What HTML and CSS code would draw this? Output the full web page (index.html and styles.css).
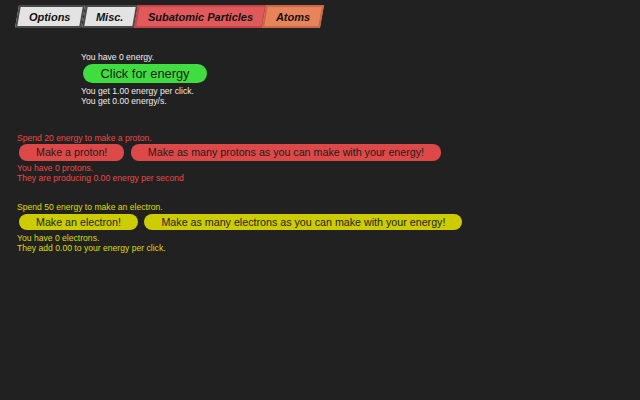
FILE: index.html
```html
<!DOCTYPE html>
<html lang="en">
<head>
    <meta charset="utf-8">
    <title>Particle Clicker</title>
    <link rel="stylesheet" href="styles.css">
</head>
<body>
    <div class="tabs">
        <button class="tab tab-grey"><span>Options</span></button>
        <button class="tab tab-grey"><span>Misc.</span></button>
        <button class="tab tab-red"><span>Subatomic Particles</span></button>
        <button class="tab tab-orange"><span>Atoms</span></button>
    </div>

    <div class="energy">
        <p>You have 0 energy.</p>
        <button class="energy-button">Click for energy</button>
        <p>You get 1.00 energy per click.</p>
        <p>You get 0.00 energy/s.</p>
    </div>

    <div class="particle proton">
        <p>Spend 20 energy to make a proton.</p>
        <div class="buttons">
            <button class="make">Make a proton!</button>
            <button class="make">Make as many protons as you can make with your energy!</button>
        </div>
        <p>You have 0 protons.</p>
        <p>They are producing 0.00 energy per second</p>
    </div>

    <div class="particle electron">
        <p>Spend 50 energy to make an electron.</p>
        <div class="buttons">
            <button class="make">Make an electron!</button>
            <button class="make">Make as many electrons as you can make with your energy!</button>
        </div>
        <p>You have 0 electrons.</p>
        <p>They add 0.00 to your energy per click.</p>
    </div>
</body>
</html>
```

FILE: styles.css
```css
body {
    font-family: 'Liberation Sans', Arial, sans-serif;
    font-size: 8.6px;
    background-color: #212121;
    color: #eeeeee;
    margin: 0;
    padding: 5px 0 0 0;
}

p {
    margin: 0;
    line-height: 10px;
}

button {
    font-family: 'Liberation Sans', Arial, sans-serif;
    cursor: pointer;
}

/* top navigation, slanted tabs */
.tabs {
    display: flex;
    height: 23px;
    margin-left: 17px;
}

.tab {
    height: 23px;
    padding: 0 10px;
    margin-right: 1px;
    border: 2px solid #4a4a4a;
    transform: skewX(-10deg);
    font-size: 11px;
    font-weight: bold;
    color: #111;
}

.tab span {
    display: inline-block;
    font-style: italic;
    transform: skewX(10deg);
}

.tab-grey {
    background-color: #e3e3e3;
}

.tab-red {
    background-color: #e05a5c;
    border-color: #c44448;
}

.tab-orange {
    background-color: #e8845c;
    border-color: #c86a48;
    margin-left: -2px;
}

/* energy */
.energy {
    margin: 24px 0 0 81px;
}

.energy-button {
    display: block;
    margin: 1.5px 0 3px 2px;
    width: 124px;
    height: 19px;
    padding: 0;
    border: none;
    border-radius: 10px;
    background-color: #40dd40;
    color: #1a1a1a;
    font-size: 12.8px;
}

/* particle sections */
.particle {
    margin-left: 17px;
}

.proton {
    margin-top: 27px;
    color: #ee4646;
}

.electron {
    margin-top: 18.5px;
    color: #dddd00;
}

.buttons {
    display: flex;
    gap: 6.5px;
    margin: 1.8px 0 2.6px 2px;
}

.make {
    height: 16.4px;
    padding: 0 17px;
    border: none;
    border-radius: 8px;
    font-size: 10.7px;
    color: #1e1e1e;
}

.proton .make {
    background-color: #dd4848;
}

.electron .make {
    background-color: #cccc00;
}
```
